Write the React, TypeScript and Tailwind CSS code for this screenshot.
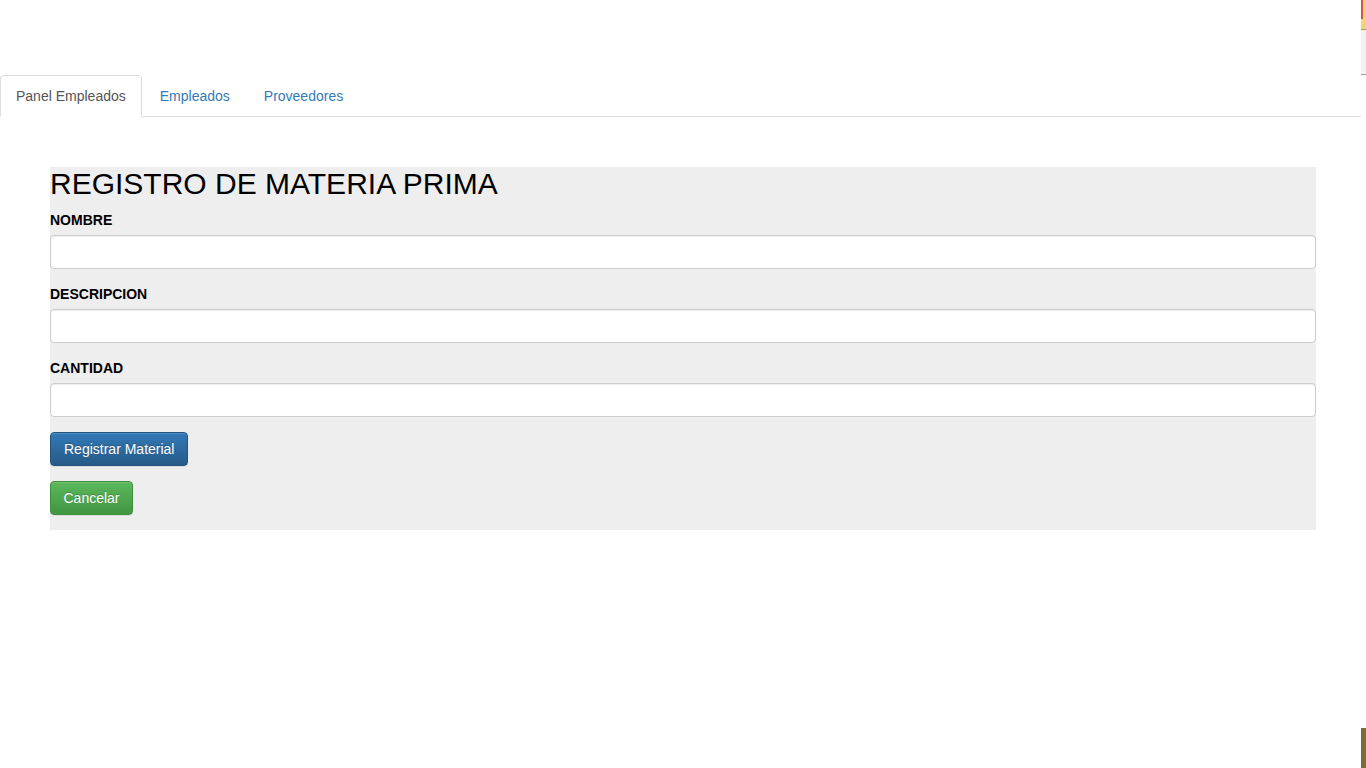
import React from "react";

export default function App() {
  const font = { fontFamily: '"Liberation Sans", Arial, Helvetica, sans-serif' };
  return (
    <div className="relative w-[1366px] h-[768px] bg-white overflow-hidden text-[14px] leading-[20px]" style={font}>
      {/* right edge artifacts */}
      <div className="absolute right-0 top-0 w-[5px] h-[30px] bg-[#f2d86c]">
        <div className="w-[2px] h-[19px] bg-[#d9534f]" />
      </div>
      <div className="absolute right-0 top-[29px] w-[5px] h-[1px] bg-[#a89a4e]" />
      <div className="absolute right-0 top-[30px] w-[5px] h-[44px] bg-[#f2f2f2]" />
      <div className="absolute right-0 top-[74px] w-[5px] h-[1px] bg-[#999999]" />
      <div className="absolute right-0 top-[728px] w-[5px] h-[40px] bg-[#7a6e36]" />

      <div className="pt-[75px] w-[1361px]">
        <ul className="flex border-b border-[#dddddd] text-[14px] leading-[20px]">
          <li className="-mb-px mr-[2px]">
            <a className="block px-[15px] py-[10px] border border-[#dddddd] border-b-white rounded-t-[4px] bg-white text-[#555555]">
              Panel Empleados
            </a>
          </li>
          <li className="-mb-px mr-[2px]">
            <a className="block px-[15px] py-[10px] border border-transparent text-[#337ab7]">Empleados</a>
          </li>
          <li className="-mb-px mr-[2px]">
            <a className="block px-[15px] py-[10px] border border-transparent text-[#337ab7]">Proveedores</a>
          </li>
        </ul>
      </div>

      <div className="mx-[50px] mt-[50px] bg-[#eeeeee] pb-[15px]">
        <h2 className="text-[30px] leading-[33px] text-black mb-[10px]">REGISTRO DE MATERIA PRIMA</h2>
        {["NOMBRE", "DESCRIPCION", "CANTIDAD"].map((l) => (
          <div key={l} className="mb-[15px]">
            <label className="inline-block text-[14px] leading-[20px] font-bold text-black mb-[5px]">{l}</label>
            <input
              className="block w-full h-[34px] bg-white border border-[#cccccc] rounded-[4px] px-[12px] shadow-[inset_0_1px_1px_rgba(0,0,0,0.075)] outline-none"
              type="text"
            />
          </div>
        ))}
        <div className="mb-[15px] flex">
          <button
            className="h-[34px] px-[13px] text-[14px] leading-[20px] text-white rounded-[4px] border border-[#245580] bg-gradient-to-b from-[#337ab7] to-[#265a88] [text-shadow:0_-1px_0_rgba(0,0,0,0.2)] shadow-[inset_0_1px_0_rgba(255,255,255,0.15),0_1px_1px_rgba(0,0,0,0.075)]"
            style={font}
          >
            Registrar Material
          </button>
        </div>
        <div className="flex">
          <button
            className="h-[34px] px-[12.5px] text-[14px] leading-[20px] text-white rounded-[4px] border border-[#3e8f3e] bg-gradient-to-b from-[#5cb85c] to-[#419641] [text-shadow:0_-1px_0_rgba(0,0,0,0.2)] shadow-[inset_0_1px_0_rgba(255,255,255,0.15),0_1px_1px_rgba(0,0,0,0.075)]"
            style={font}
          >
            Cancelar
          </button>
        </div>
      </div>
    </div>
  );
}
